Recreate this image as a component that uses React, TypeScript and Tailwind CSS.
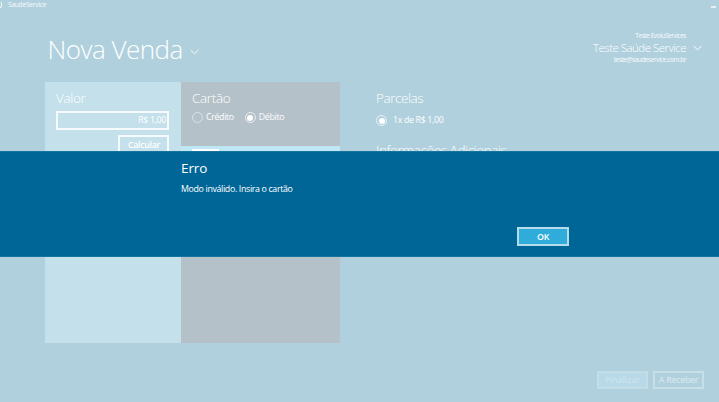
import React from "react";

function Chevron({ className }: { className: string }) {
  return (
    <svg viewBox="0 0 10 6" fill="none" stroke="currentColor" strokeWidth="1.1" className={className}>
      <path d="M0.7 0.8 5 5 9.3 0.8" />
    </svg>
  );
}

function Radio({ label, checked = false }: { label: string; checked?: boolean }) {
  return (
    <label className="flex h-[11px] items-center whitespace-nowrap">
      <span
        className={`flex size-[11px] items-center justify-center rounded-full border ${
          checked ? "border-white/70" : "border-white/50"
        }`}
      >
        {checked && <span className="size-[6px] rounded-full bg-white" />}
      </span>
      <span className="relative top-[0.5px]">{label}</span>
    </label>
  );
}

function TitleBar() {
  return (
    <div className="flex h-[10px] items-center justify-between pr-[3px] text-[6.5px] leading-[10px] text-white/90">
      <div className="flex items-center">
        <span className="h-[6px] w-[2px] rounded-r-sm border-r border-b border-white/90" />
        <span className="ml-[6px] tracking-[-0.18px]">SaudeService</span>
      </div>
      <span className="mt-[3px] h-[2px] w-[5px] bg-white/70" />
    </div>
  );
}

function Header() {
  return (
    <header className="flex h-[72px] justify-between pr-[17px] pl-[47.5px] text-white">
      <div className="flex pt-[21px]">
        <h1 className="text-[26px] leading-[36px] font-light tracking-[-0.5px]">Nova Venda</h1>
        <Chevron className="mt-[18px] ml-[7.5px] h-[6px] w-[9px] opacity-90" />
      </div>
      <div className="flex pt-[21px]">
        <div className="flex flex-col items-end whitespace-nowrap text-white/90">
          <span className="text-[6.5px] leading-[10px] tracking-[-0.44px]">Teste EvoluServices</span>
          <span className="text-[11.5px] leading-[14px] font-[350] tracking-[-0.52px] text-white">
            Teste Saúde Service
          </span>
          <span className="text-[6.5px] leading-[10px] tracking-[-0.44px]">teste@saudeservice.com.br</span>
        </div>
        <Chevron className="mt-[14px] ml-[7px] h-[6px] w-[9px]" />
      </div>
    </header>
  );
}

export default function App() {
  return (
    <div className="relative flex h-[402px] w-[719px] flex-col overflow-hidden bg-[#b0d0dd] font-['Open_Sans','Noto_Sans',sans-serif] text-[8.8px] tracking-[-0.33px] text-white">
      <TitleBar />
      <Header />

      <main className="flex h-[261px] pl-[45px]">
        <section className="w-[136px] bg-[#c4e0eb] pt-[7px] pr-[12px] pl-[11px]">
          <h2 className="text-[13.5px] leading-[18px] font-[350]">Valor</h2>
          <div className="mt-[4px] flex h-[19px] items-center justify-end border-2 border-white/85 pr-[1px] leading-none">
            R$ 1,00
          </div>
          <button className="mt-[5px] ml-auto flex h-[20px] w-[51px] items-center justify-center border-2 border-white/85 pt-[1px] pl-[1px] leading-none font-semibold">
            Calcular
          </button>
        </section>

        <section className="flex w-[159px] flex-col bg-[#b4c1c9]">
          <div className="h-[64px] pt-[7px] pl-[11px]">
            <h2 className="text-[13.5px] leading-[18px] font-[350]">Cartão</h2>
            <div className="mt-[5px] flex gap-[11px] [&>label]:gap-[3px]">
              <Radio label="Crédito" />
              <Radio label="Débito" checked />
            </div>
          </div>
          <div className="h-[40px] bg-[#c0e7f5] pt-[3px] pl-[11px]">
            <div className="h-[20px] w-[27px] bg-white" />
          </div>
        </section>

        <section className="pt-[7px] pl-[36px]">
          <h2 className="text-[13.5px] leading-[18px] font-[350] tracking-[-0.45px]">Parcelas</h2>
          <div className="mt-[8px] [&>label]:gap-[6px]">
            <Radio label="1x de R$ 1,00" checked />
          </div>
          <h2 className="mt-[15px] text-[13.5px] leading-[18px] font-[350] tracking-[-0.45px]">
            Informações Adicionais
          </h2>
        </section>
      </main>

      <footer className="mt-[28px] flex justify-end gap-[5px] pr-[15px]">
        <button className="flex h-[18px] w-[51px] items-center justify-center border-2 border-[#c2dce8] bg-[#b7d9e8] leading-none font-semibold tracking-[-0.1px] text-[#cbe3ee]">
          Finalizar
        </button>
        <button className="flex h-[18px] w-[51px] items-center justify-center border-2 border-[#c8dfe8] leading-none font-semibold whitespace-nowrap text-[#d2e5ed]">
          A Receber
        </button>
      </footer>

      <div
        role="dialog"
        className="absolute inset-x-0 top-[151px] h-[106px] border-y border-[#15759f] bg-[#006698] pt-[7px] pl-[181px]"
      >
        <h2 className="text-[13.5px] leading-[18px] tracking-[-0.1px]">Erro</h2>
        <p className="mt-[6px] leading-[13px]">Modo inválido. Insira o cartão</p>
        <button className="mt-[31px] ml-[336px] flex h-[19px] w-[52px] items-center justify-center border-2 border-[#b5dceb] bg-[#30acdb] pt-[1px] leading-none font-semibold">
          OK
        </button>
      </div>
    </div>
  );
}
